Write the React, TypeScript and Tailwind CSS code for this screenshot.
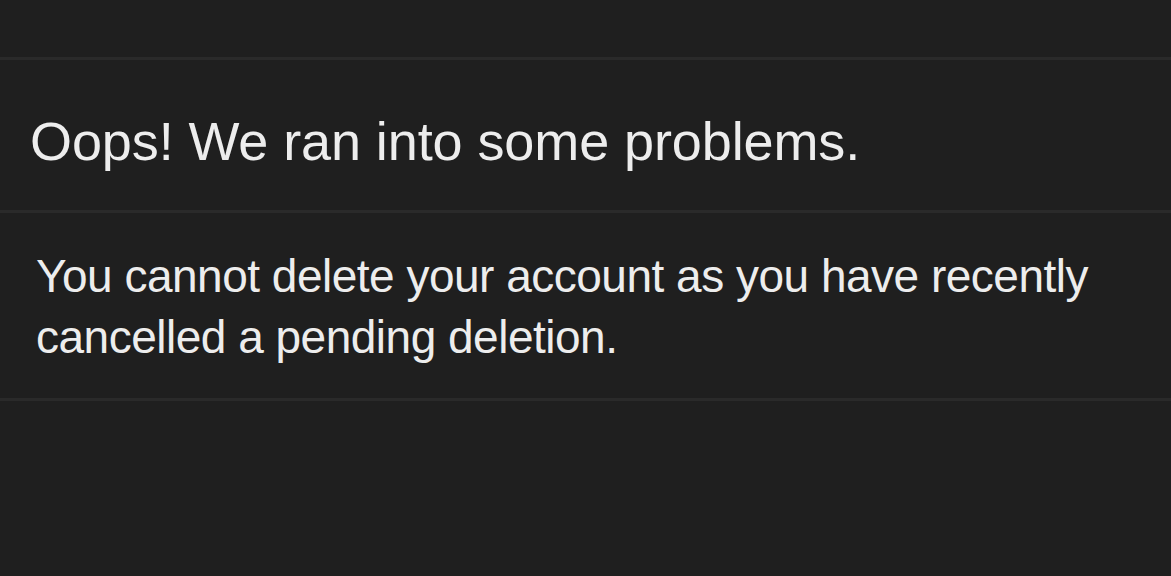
export default function App() {
  return (
    <div className="min-h-[576px] w-full bg-[#1f1f1f] text-[#ededed]" style={{ fontFamily: '"Liberation Sans", Arial, sans-serif' }}>
      <div className="h-[60px] border-b-[3px] border-[#2a2a2a]" />
      <div className="h-[153px] border-b-[3px] border-[#2a2a2a] pl-[30px] pt-[50px]">
        <h1 className="text-[54px] leading-[62px] tracking-[-0.1px]">Oops! We ran into some problems.</h1>
      </div>
      <div className="border-b-[3px] border-[#2a2a2a] pl-[36px] pt-[33px] pb-[30px]">
        <p className="text-[46px] leading-[61px] tracking-[-0.5px] pr-[60px]">
          You cannot delete your account as you have recently cancelled a pending deletion.
        </p>
      </div>
    </div>
  );
}
